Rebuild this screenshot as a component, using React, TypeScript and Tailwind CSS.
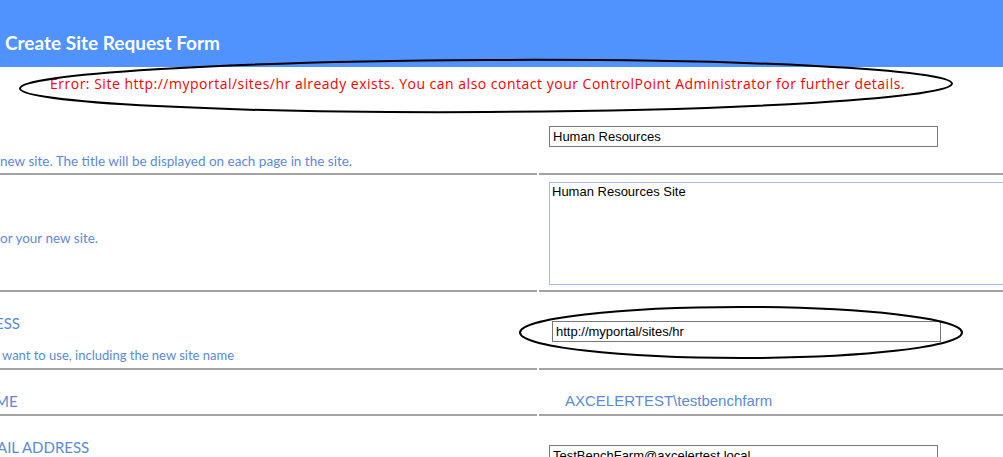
import React from "react";

const label = "font-['Lato','Open_Sans',sans-serif] text-[#5b8ad6]";
const field =
  "flex h-[21px] w-[389px] items-center border border-[#777] px-[3px] font-['Liberation_Sans',Arial,sans-serif] text-[13px] text-black";

export default function App() {
  return (
    <div className="relative h-[457px] w-[1003px] overflow-hidden bg-white">
      {/* Header */}
      <div className="flex h-[67px] items-end bg-[#5092fe] pb-[13px] pl-[5px]">
        <h1 className="font-['Lato','Open_Sans',sans-serif] text-[19px] font-bold leading-[22px] text-white">
          Create Site Request Form
        </h1>
      </div>

      {/* Error */}
      <div className="h-[34px] pl-[50px] pt-[8px]">
        <p className="whitespace-nowrap font-['Open_Sans',sans-serif] text-[14px] leading-[18px] tracking-[0.5px] text-[#ff0000]">
          Error: Site http://myportal/sites/hr already exists. You can also contact your ControlPoint
          Administrator for further details.
        </p>
      </div>

      {/* Form rows */}
      <div className="grid grid-cols-[537px_1fr] gap-x-[2px]">
        {/* Title */}
        <div className="h-[74px] border-b-2 border-[#a3a3a3] pt-[52px]">
          <p className={`${label} text-[13.5px] leading-[16px]`}>
            new site. The title will be displayed on each page in the site.
          </p>
        </div>
        <div className="h-[74px] border-b-2 border-[#a3a3a3] pl-[10px] pt-[25px]">
          <div className={field}>Human Resources</div>
        </div>

        {/* Description */}
        <div className="h-[117px] border-b-2 border-[#a3a3a3] pt-[55px]">
          <p className={`${label} text-[13.5px] leading-[16px]`}>or your new site.</p>
        </div>
        <div className="h-[117px] overflow-hidden border-b-2 border-[#a3a3a3] pl-[10px] pt-[7px]">
          <div className="h-[103px] w-[500px] border border-[#aabbdd] px-[2px] pt-[1px] font-['Liberation_Sans',Arial,sans-serif] text-[13px] leading-[16px] text-black">
            Human Resources Site
          </div>
        </div>

        {/* Site address */}
        <div className="h-[78px] border-b-2 border-[#a3a3a3] pt-[22px]">
          <p className={`${label} -ml-[5px] text-[15px] leading-[18px]`}>ESS</p>
          <p className={`${label} mt-[15px] pl-[2px] text-[13px] leading-[16px]`}>
            want to use, including the new site name
          </p>
        </div>
        <div className="h-[78px] border-b-2 border-[#a3a3a3] pl-[13px] pt-[29px]">
          <div className={field}>http://myportal/sites/hr</div>
        </div>

        {/* Owner name */}
        <div className="h-[46px] border-b-2 border-[#a3a3a3] pt-[22px]">
          <p className={`${label} -ml-[5px] text-[15px] leading-[18px]`}>ME</p>
        </div>
        <div className="h-[46px] border-b-2 border-[#a3a3a3] pl-[26px] pt-[21px]">
          <p className="font-['Liberation_Sans',Arial,sans-serif] text-[15px] leading-[19px] text-[#5b8ad6]">
            AXCELERTEST\testbenchfarm
          </p>
        </div>

        {/* Owner email */}
        <div className="h-[60px] pt-[22px]">
          <p className={`${label} -ml-[3px] text-[15px] leading-[18px]`}>AIL ADDRESS</p>
        </div>
        <div className="h-[60px] pl-[10px] pt-[29px]">
          <div className={field}>TestBenchFarm@axcelertest.local</div>
        </div>
      </div>

      {/* Hand-drawn annotation ellipses */}
      <svg className="pointer-events-none absolute left-0 top-0" width="1003" height="457">
        <ellipse cx="486" cy="86" rx="466" ry="26" fill="none" stroke="#000" strokeWidth="2" transform="rotate(-0.3 486 86)" />
        <ellipse cx="741" cy="332.5" rx="221" ry="25.5" fill="none" stroke="#000" strokeWidth="2" />
      </svg>
    </div>
  );
}
